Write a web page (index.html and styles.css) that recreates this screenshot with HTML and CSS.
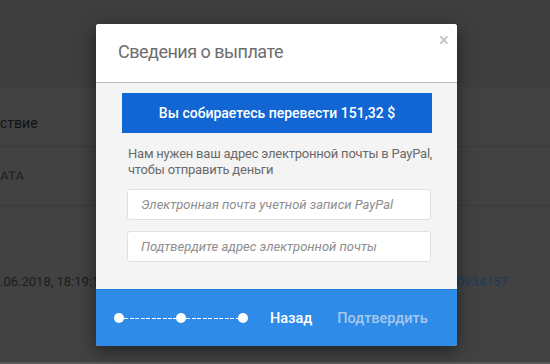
FILE: index.html
```html
<!DOCTYPE html>
<html lang="ru">
<head>
  <meta charset="UTF-8" />
  <title>Сведения о выплате</title>
  <link rel="stylesheet" href="styles.css">
</head>
<body>
  <!-- Page under the overlay -->
  <div class="page">
    <div class="topbar"></div>
    <div class="row row-head">ствие</div>
    <div class="row row-sub">АТА</div>
    <div class="row row-data">
      <span class="date">.06.2018, 18:19:12</span>
      <span class="txn">7100934157</span>
    </div>
  </div>

  <div class="overlay">
    <div class="modal">
      <div class="modal-header">
        <h2 class="modal-title">Сведения о выплате</h2>
        <span class="close">&times;</span>
      </div>
      <div class="modal-body">
        <div class="banner">Вы собираетесь перевести 151,32 $</div>
        <p class="hint">Нам нужен ваш адрес электронной почты в PayPal,<br>чтобы отправить деньги</p>
        <input class="field" type="text" placeholder="Электронная почта учетной записи PayPal">
        <input class="field" type="text" placeholder="Подтвердите адрес электронной почты">
      </div>
      <div class="modal-footer">
        <div class="steps">
          <span class="dot"></span>
          <span class="dash"></span>
          <span class="dot"></span>
          <span class="dash"></span>
          <span class="dot"></span>
        </div>
        <button class="btn btn-back">Назад</button>
        <button class="btn btn-confirm">Подтвердить</button>
      </div>
    </div>
  </div>
</body>
</html>
```

FILE: styles.css
```css
* {
  box-sizing: border-box;
  margin: 0;
  padding: 0;
}

body {
  width: 550px;
  height: 364px;
  overflow: hidden;
  position: relative;
  font-family: Roboto, 'Noto Sans', sans-serif;
  background-color: #424242;
}

/* Background page (dimmed) */
.page {
  height: 100%;
  border-bottom: 2px solid #585858;
}

.topbar {
  height: 87px;
  background-color: #3e3e3e;
}

.row {
  border-bottom: 1px solid #3a3a3a;
  font-size: 14px;
  color: #111;
}

.row-head {
  height: 60px;
  padding-top: 28px;
}

.row-sub {
  height: 59px;
  padding-top: 21px;
  font-weight: 700;
  font-size: 13px;
  color: #2a2a2a;
}

.row-data {
  display: flex;
  justify-content: space-between;
  padding: 68px 42px 0 0;
  border-bottom: none;
  color: #1c1c1c;
  font-size: 13px;
}

.txn {
  color: #1d3a5c;
}

/* Modal */
.overlay {
  position: absolute;
  top: 0;
  left: 0;
  width: 100%;
  height: 100%;
}

.modal {
  position: absolute;
  top: 24px;
  left: 96px;
  width: 361px;
  border-radius: 3px;
  overflow: hidden;
  background-color: #f4f4f4;
  box-shadow: 0 5px 18px rgba(0, 0, 0, 0.5);
}

.modal-header {
  position: relative;
  height: 59px;
  background-color: #fff;
  border-bottom: 1px solid #bdbdbd;
  padding: 17px 22px 0;
}

.modal-title {
  font-size: 18px;
  font-weight: 400;
  letter-spacing: -0.5px;
  color: #6d6d6d;
}

.close {
  position: absolute;
  top: 4px;
  right: 8px;
  font-size: 19px;
  color: #c4c4c4;
}

.modal-body {
  padding: 10px 25px 27px 26px;
}

.banner {
  height: 40px;
  line-height: 40px;
  text-align: center;
  background-color: #1166d3;
  color: #fff;
  font-size: 14px;
  font-weight: 500;
}

.hint {
  padding: 13px 0 0 6px;
  margin-right: -6px;
  font-size: 13px;
  line-height: 16px;
  letter-spacing: -0.22px;
  white-space: nowrap;
  color: #6a6a6a;
}

.field {
  display: block;
  width: 304px;
  height: 31px;
  margin: 11px 0 0 5px;
  padding: 0 13px;
  border: 1px solid #e0e0e0;
  border-radius: 3px;
  background-color: #fff;
  font-family: inherit;
  font-size: 13px;
  font-style: italic;
}

.field + .field {
  margin-top: 11px;
}

.field::placeholder {
  color: #8e8e8e;
}

.modal-footer {
  display: flex;
  align-items: center;
  height: 57px;
  padding-left: 18px;
  background-color: #2e8ce8;
  border-top: 1px solid #1f7be0;
}

.steps {
  display: flex;
  align-items: center;
}

.dot {
  width: 10px;
  height: 10px;
  border-radius: 50%;
  background-color: #fff;
}

.dash {
  width: 52px;
  height: 1px;
  background: repeating-linear-gradient(to right, #fff 0 4px, transparent 4px 5.5px);
}

.btn {
  background: none;
  border: none;
  font-family: inherit;
  font-size: 14.5px;
  font-weight: 500;
  cursor: pointer;
}

.btn-back {
  margin-left: 22px;
  color: #fff;
}

.btn-confirm {
  margin-left: 25px;
  color: #a5c7ee;
}
```
